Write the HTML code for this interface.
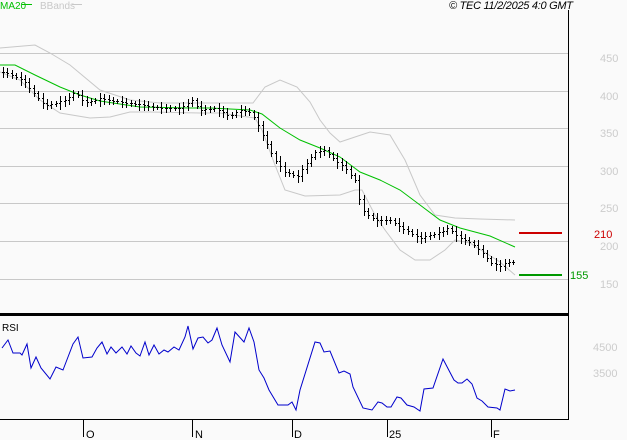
<!DOCTYPE html>
<html><head><meta charset="utf-8"><style>
html,body{margin:0;padding:0;background:#fafafa;}
svg{display:block;font-family:"Liberation Sans",sans-serif;}
</style></head><body>
<svg id="s" width="627" height="440" viewBox="0 0 627 440" xmlns="http://www.w3.org/2000/svg" shape-rendering="crispEdges">
<rect width="627" height="440" fill="#fafafa"/>
<g stroke="#c8c8c8" stroke-width="1">
<line x1="0" y1="53.5" x2="569" y2="53.5"/>
<line x1="0" y1="91.5" x2="569" y2="91.5"/>
<line x1="0" y1="128.5" x2="569" y2="128.5"/>
<line x1="0" y1="166.5" x2="569" y2="166.5"/>
<line x1="0" y1="203.5" x2="569" y2="203.5"/>
<line x1="0" y1="241.5" x2="569" y2="241.5"/>
<line x1="0" y1="279.5" x2="569" y2="279.5"/>
</g>
<g fill="#cccccc" font-size="11">
<text x="600" y="62">450</text><text x="600" y="100">400</text><text x="600" y="137">350</text>
<text x="600" y="175">300</text><text x="600" y="212">250</text><text x="600" y="250">200</text><text x="600" y="288">150</text>
<text x="593" y="351">4500</text><text x="593" y="377">3500</text>
</g>
<g fill="none" shape-rendering="auto" stroke-width="1">
<polyline stroke="#c8c8c8" points="0,48 35,45 50,53 70,65 100,90 130,100 160,103 220,103 253,103 265,87 280,80 297,87 310,102 320,120 330,133 340,142 355,137 370,132 390,135 405,160 420,195 435,215 455,218 480,219 515,220"/>
<polyline stroke="#c8c8c8" points="0,72 20,80 40,100 60,113 90,118 110,117 130,112 150,112 200,113 220,113 255,118 262,130 275,165 285,190 305,196 340,195 355,190 362,190 375,215 385,230 400,250 415,260 430,260 445,250 455,240 470,243 500,262 515,275"/>
<polyline stroke="#00c000" points="0,65 15,65 35,75 60,87 80,95 100,101 140,107 190,108 210,108 250,110 262,114 280,128 300,140 320,148 340,157 360,172 380,180 400,190 420,205 440,220 460,228 490,236 515,247"/>
<polyline stroke="#0000cc" points="2,348 8,340 13,353 20,353 22,355 27,344 31,368 36,357 41,368 50,379 56,367 63,370 73,344 78,337 83,358 92,357 97,348 102,342 107,354 111,347 116,353 122,347 127,354 131,346 136,353 140,356 145,342 149,355 154,345 159,354 164,350 168,352 174,347 179,350 185,337 188,326 193,349 198,338 203,337 208,343 212,340 217,328 222,345 230,362 235,332 244,342 249,328 254,342 259,370 264,378 269,390 278,405 288,405 292,402 296,410 300,390 315,342 320,343 324,352 330,351 339,373 344,371 350,374 353,387 363,408 372,410 378,402 382,403 387,407 391,407 397,397 401,398 407,405 414,407 420,411 424,389 433,388 443,359 454,380 458,383 462,383 467,379 472,384 477,398 482,401 488,407 497,408 500,410 505,389 510,391 515,390"/>
</g>
<g id="bars" stroke="#000" stroke-width="1"></g>
<rect x="0" y="313" width="569" height="3" fill="#000"/>
<rect x="568" y="10" width="1" height="410" fill="#000"/>
<rect x="0" y="419" width="569" height="1" fill="#000"/>
<g fill="#000">
<rect x="83" y="419" width="1" height="18"/><rect x="192" y="419" width="1" height="18"/>
<rect x="292" y="419" width="1" height="18"/><rect x="387" y="419" width="1" height="18"/><rect x="491" y="419" width="1" height="18"/>
</g>
<g font-size="11" fill="#000">
<text x="86" y="438">O</text><text x="195" y="438">N</text><text x="294" y="438">D</text><text x="389" y="438">25</text><text x="493" y="438">F</text>
<text x="2" y="331" font-size="10">RSI</text>
<text x="449" y="9" font-size="11" font-style="italic" textLength="124">© TEC 11/2/2025 4:0 GMT</text>
</g>
<text x="0" y="9" font-size="10" fill="#00c000">MA20</text>
<rect x="22" y="4" width="10" height="1" fill="#00c000"/>
<text x="40" y="9" font-size="10" fill="#c8c8c8">BBands</text>
<rect x="72" y="4" width="10" height="1" fill="#c8c8c8"/>
<rect x="519" y="232" width="43" height="2" fill="#cc0000"/>
<text x="594" y="238" font-size="11" fill="#cc0000">210</text>
<rect x="519" y="274" width="43" height="2" fill="#009900"/>
<text x="570" y="279" font-size="11" fill="#009900">155</text>
</svg>
<script>
var k=[[3,72],[15,76],[25,82],[35,95],[45,105],[55,103],[65,100],[75,92],[85,103],[100,98],[120,102],[140,104],[160,108],[180,108],[192,100],[200,110],[215,108],[230,116],[240,110],[250,112],[255,118],[265,140],[275,160],[285,172],[298,176],[305,165],[315,152],[325,150],[335,160],[345,168],[355,180],[362,210],[375,220],[390,220],[405,230],[420,238],[430,235],[440,232],[448,228],[460,238],[470,242],[480,250],[490,262],[500,266],[507,262],[515,262]];
function f(x){for(var i=0;i<k.length-1;i++){if(x<=k[i+1][0]){var t=(x-k[i][0])/(k[i+1][0]-k[i][0]);return k[i][1]+t*(k[i+1][1]-k[i][1]);}}return k[k.length-1][1];}
var g=document.getElementById('bars'),h='',prev=f(3),n=0;
for(var x=3;x<=515;x+=4.4){n++;var X=Math.round(x)+0.5;var c=Math.round(f(x));var o=Math.round(prev);var r=5+((n*7)%9);var hi=Math.round(Math.min(c,o)-r*0.4),lo=Math.round(Math.max(c,o)+r*0.5);
h+='<line x1="'+X+'" y1="'+hi+'" x2="'+X+'" y2="'+lo+'"/><line x1="'+(X-1.5)+'" y1="'+(o+.5)+'" x2="'+X+'" y2="'+(o+.5)+'"/><line x1="'+X+'" y1="'+(c+.5)+'" x2="'+(X+1.5)+'" y2="'+(c+.5)+'"/>';prev=c;}
g.innerHTML=h;
</script>
</body></html>
